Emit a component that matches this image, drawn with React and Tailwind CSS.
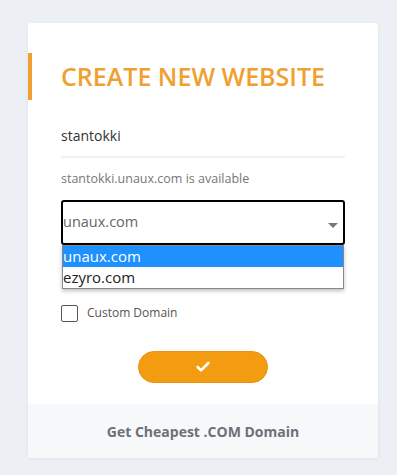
import { Check } from 'lucide-react';

const App = () => {
  return (
    <div className="min-h-[475px] w-full bg-[#eceff4] pt-[23px] pl-[28px]" style={{ fontFamily: '"Open Sans", sans-serif' }}>
      <div className="w-[350px] bg-white rounded-[3px] shadow-[0_1px_4px_rgba(0,0,0,0.06)] overflow-hidden">
        <div className="pt-[30px]">
          <div className="border-l-[4px] border-[#f0a030] h-[47px] flex items-center pl-[29px]">
            <h1 className="text-[25px] font-semibold text-[#f0a030] leading-none">CREATE NEW WEBSITE</h1>
          </div>
        </div>

        <div className="px-[33px]">
          <div className="mt-[26px] border-b-2 border-[#eef0f2] pb-[10px] text-[14px] text-[#333] leading-[20px]">stantokki</div>
          <p className="mt-[12px] text-[12.5px] text-[#777] leading-[18px]">stantokki.unaux.com is available</p>

          <div className="relative mt-[12px]">
            <div className="h-[45px] border-2 border-black rounded-[3px] flex items-center justify-between pr-[5px]">
              <span className="text-[14.5px] text-[#666] leading-none">unaux.com</span>
              <span className="mt-[6px] w-0 h-0 border-l-[5px] border-r-[5px] border-t-[5px] border-l-transparent border-r-transparent border-t-[#777]"></span>
            </div>
            <div className="absolute left-[1px] right-[1px] top-[45px] bg-white border border-[#888] shadow-[0_2px_4px_rgba(0,0,0,0.25)]">
              <div className="h-[21px] bg-[#1e90ff] text-white text-[15px] leading-[21px]">unaux.com</div>
              <div className="h-[21px] text-[#222] text-[15px] leading-[21px]">ezyro.com</div>
            </div>
          </div>

          <div className="mt-[59px] flex items-center gap-[9px]">
            <span className="w-[17px] h-[17px] border border-[#555] rounded-[2px] bg-white"></span>
            <span className="text-[12px] text-[#555]">Custom Domain</span>
          </div>

          <div className="flex justify-center mt-[29px] mb-[21px]">
            <button className="w-[130px] h-[32px] rounded-full bg-[#f39c12] border border-[#e89410] flex items-center justify-center">
              <Check size={16} strokeWidth={4} className="text-white" />
            </button>
          </div>
        </div>

        <div className="bg-[#f7f8f9] h-[54px] flex items-center justify-center">
          <span className="text-[14px] font-bold text-[#6c7176]">Get Cheapest .COM Domain</span>
        </div>
      </div>
    </div>
  );
};

export default App;
